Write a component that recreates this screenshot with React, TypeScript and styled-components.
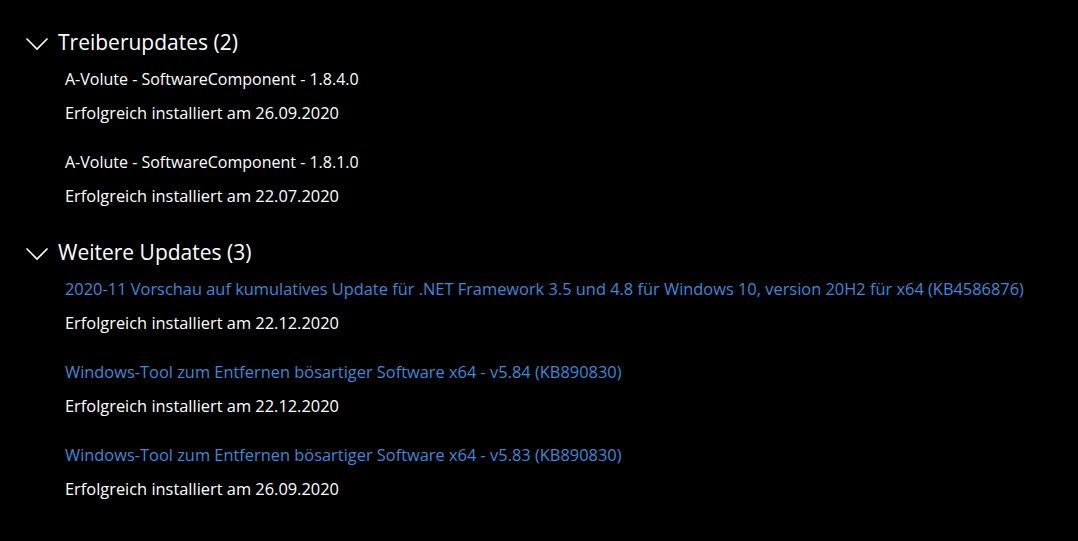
import React from "react";
import styled, { createGlobalStyle } from "styled-components";

const Global = createGlobalStyle`
  html, body {
    margin: 0;
    padding: 0;
    background: #000;
  }
  body {
    font-family: "Open Sans", "Noto Sans", "Liberation Sans", sans-serif;
    color: #fff;
    -webkit-font-smoothing: antialiased;
  }
`;

const Page = styled.div`
  width: 1078px;
  height: 541px;
  box-sizing: border-box;
  background: #000;
  padding: 22px 0 0 25px;
  display: flex;
  flex-direction: column;
  gap: 19px;
  overflow: hidden;
`;

const Section = styled.section`
  display: flex;
  flex-direction: column;
`;

const Header = styled.div`
  height: 40px;
  display: flex;
  align-items: center;
`;

const Chevron = styled.svg`
  width: 24px;
  height: 14px;
  margin-top: 4px;
  margin-right: 9px;
  flex: none;
`;

const HeaderText = styled.h2`
  margin: 0;
  font-size: 21px;
  font-weight: 400;
  line-height: 40px;
  color: #fff;
`;

const Items = styled.div`
  display: flex;
  flex-direction: column;
  gap: 15px;
  padding-left: 40px;
`;

const Item = styled.div`
  display: flex;
  flex-direction: column;
`;

const Title = styled.div<{ $link?: boolean }>`
  font-size: ${(p) => (p.$link ? "16.4px" : "16px")};
  line-height: 34px;
  white-space: nowrap;
  color: ${(p) => (p.$link ? "#3a8ada" : "#fff")};
`;

const Sub = styled.div`
  font-size: 16.4px;
  line-height: 34px;
  white-space: nowrap;
  color: #fff;
`;

type Entry = { title: string; date: string; link?: boolean };

const sections: { name: string; items: Entry[] }[] = [
  {
    name: "Treiberupdates (2)",
    items: [
      { title: "A-Volute - SoftwareComponent - 1.8.4.0", date: "26.09.2020" },
      { title: "A-Volute - SoftwareComponent - 1.8.1.0", date: "22.07.2020" },
    ],
  },
  {
    name: "Weitere Updates (3)",
    items: [
      {
        title:
          "2020-11 Vorschau auf kumulatives Update für .NET Framework 3.5 und 4.8 für Windows 10, version 20H2 für x64 (KB4586876)",
        date: "22.12.2020",
        link: true,
      },
      {
        title: "Windows-Tool zum Entfernen bösartiger Software x64 - v5.84 (KB890830)",
        date: "22.12.2020",
        link: true,
      },
      {
        title: "Windows-Tool zum Entfernen bösartiger Software x64 - v5.83 (KB890830)",
        date: "26.09.2020",
        link: true,
      },
    ],
  },
];

export default function App() {
  return (
    <>
      <Global />
      <Page>
        {sections.map((s) => (
          <Section key={s.name}>
            <Header>
              <Chevron viewBox="0 0 24 14">
                <path d="M1.5 1.5 L12 12 L22.5 1.5" fill="none" stroke="#fff" strokeWidth="1.6" />
              </Chevron>
              <HeaderText>{s.name}</HeaderText>
            </Header>
            <Items>
              {s.items.map((it, i) => (
                <Item key={i}>
                  <Title $link={it.link}>{it.title}</Title>
                  <Sub>Erfolgreich installiert am {it.date}</Sub>
                </Item>
              ))}
            </Items>
          </Section>
        ))}
      </Page>
    </>
  );
}
